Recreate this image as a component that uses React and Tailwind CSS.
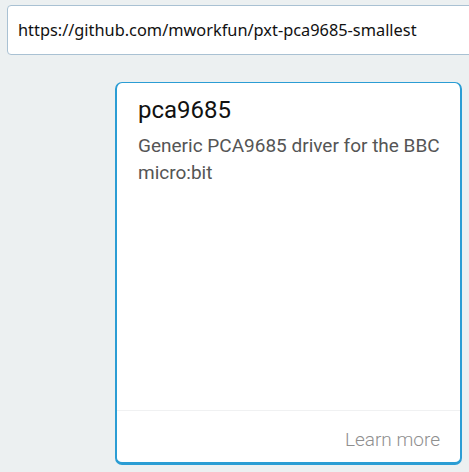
export default function App() {
    return (
        <div className="min-h-screen w-full overflow-hidden bg-[#ecf0f1]">
            <div className="pl-[7px] pt-[5px]">
                <input
                    type="text"
                    readOnly
                    value="https://github.com/mworkfun/pxt-pca9685-smallest"
                    className="block w-[490px] h-[50px] rounded-[4px] border border-[#a9c1d3] bg-white pl-[10px] text-[16.35px] text-[#111] outline-none"
                    style={{ fontFamily: '"Noto Sans", "Open Sans", sans-serif' }}
                />
            </div>

            <div
                className="ml-[115px] mt-[27px] flex h-[383px] w-[347px] flex-col rounded-[7px] border-x-2 border-t border-b-[3px] border-[#2b9dd4] bg-white"
                style={{ fontFamily: 'Roboto, "Noto Sans", sans-serif' }}
            >
                <div className="flex-1 pl-[21px] pr-[14px] pt-[11px]">
                    <h2 className="text-[24px] leading-[32px] font-normal text-[#111]">pca9685</h2>
                    <p className="mt-[6px] text-[19px] leading-[27px] text-[#555]">
                        Generic PCA9685 driver for the BBC micro:bit
                    </p>
                </div>
                <div className="border-t border-[#f0f1f2] px-[20px] pt-[17px] h-[52px] flex justify-end">
                    <span className="text-[19px] leading-[24px] font-light text-[#8f8f8f]">Learn more</span>
                </div>
            </div>
        </div>
    );
}
